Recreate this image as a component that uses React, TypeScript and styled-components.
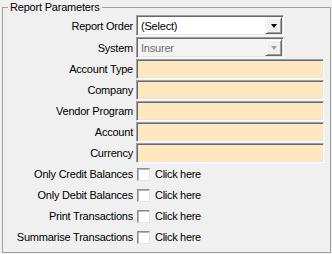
import React from "react";
import styled, { createGlobalStyle } from "styled-components";

const GlobalStyle = createGlobalStyle`
  html, body {
    margin: 0;
    padding: 0;
    background: #f0f0f0;
  }
  body {
    font-family: "Liberation Sans", Arial, sans-serif;
    font-size: 11px;
    color: #000;
  }
`;

const Page = styled.div`
  width: 332px;
  height: 254px;
  background: #f0f0f0;
  overflow: hidden;
`;

const GroupBox = styled.fieldset`
  box-sizing: border-box;
  width: 329px;
  height: 252px;
  margin: 1px 1px 1px 2px;
  padding: 0;
  border: 1px solid #a0a0a0;
  min-width: 0;
`;

const Legend = styled.legend`
  margin-left: 5px;
  padding: 0 2px;
  line-height: 13px;
  letter-spacing: -0.2px;
`;

const Form = styled.div`
  display: grid;
  grid-template-columns: 130px 1fr;
  grid-template-rows: 21px 21px repeat(9, 20px);
  column-gap: 3px;
  row-gap: 1px;
  padding-top: 1px;
`;

const Label = styled.label`
  display: flex;
  align-items: center;
  justify-content: flex-end;
  white-space: nowrap;
  letter-spacing: -0.22px;
`;

const sunken = `
  box-sizing: border-box;
  border-style: solid;
  border-width: 1px;
  border-color: #a0a0a0 #ffffff #ffffff #a0a0a0;
  box-shadow: inset 1px 1px 0 #696969, inset -1px -1px 0 #e3e3e3;
`;

const Combo = styled.div<{ $disabled?: boolean }>`
  ${sunken}
  width: 148px;
  height: 21px;
  display: flex;
  align-items: stretch;
  padding: 1px;
  background: ${({ $disabled }) => ($disabled ? "#f4f4f4" : "#ffffff")};
  color: ${({ $disabled }) => ($disabled ? "#6d6d6d" : "#000000")};
`;

const ComboText = styled.span`
  flex: 1;
  display: flex;
  align-items: center;
  padding-left: 3px;
  letter-spacing: -0.2px;
`;

const DropButton = styled.span`
  box-sizing: border-box;
  width: 17px;
  display: flex;
  align-items: center;
  justify-content: center;
  background: #f0f0f0;
  border-style: solid;
  border-width: 1px;
  border-color: #f0f0f0 #696969 #696969 #f0f0f0;
  box-shadow: inset 1px 1px 0 #ffffff, inset -1px -1px 0 #a0a0a0;
`;

const Arrow = styled.span<{ $disabled?: boolean }>`
  width: 0;
  height: 0;
  border-left: 3.5px solid transparent;
  border-right: 3.5px solid transparent;
  border-top: 4px solid ${({ $disabled }) => ($disabled ? "#a0a0a0" : "#000")};
`;

const TextBox = styled.input`
  ${sunken}
  width: 188px;
  height: 20px;
  margin: 0;
  padding: 0 3px;
  background: #ffe7bf;
  font: inherit;
  outline: none;
`;

const CheckRow = styled.div`
  display: flex;
  align-items: center;
  gap: 5px;
  padding-left: 1px;
  letter-spacing: -0.3px;
`;

const CheckBox = styled.span`
  box-sizing: border-box;
  width: 13px;
  height: 13px;
  background: #fff;
  border-style: solid;
  border-width: 1px;
  border-color: #8f8f8f #e3e3e3 #e3e3e3 #8f8f8f;
  box-shadow: inset 1px 1px 0 #b5b5b5;
`;

const textFields = ["Account Type", "Company", "Vendor Program", "Account", "Currency"];
const checkFields = [
  "Only Credit Balances",
  "Only Debit Balances",
  "Print Transactions",
  "Summarise Transactions",
];

export default function App() {
  return (
    <Page>
      <GlobalStyle />
      <GroupBox>
        <Legend>Report Parameters</Legend>
        <Form>
          <Label>Report Order</Label>
          <Combo>
            <ComboText>(Select)</ComboText>
            <DropButton>
              <Arrow />
            </DropButton>
          </Combo>

          <Label>System</Label>
          <Combo $disabled>
            <ComboText>Insurer</ComboText>
            <DropButton>
              <Arrow $disabled />
            </DropButton>
          </Combo>

          {textFields.map((name) => (
            <React.Fragment key={name}>
              <Label>{name}</Label>
              <TextBox readOnly />
            </React.Fragment>
          ))}

          {checkFields.map((name) => (
            <React.Fragment key={name}>
              <Label>{name}</Label>
              <CheckRow>
                <CheckBox />
                Click here
              </CheckRow>
            </React.Fragment>
          ))}
        </Form>
      </GroupBox>
    </Page>
  );
}
